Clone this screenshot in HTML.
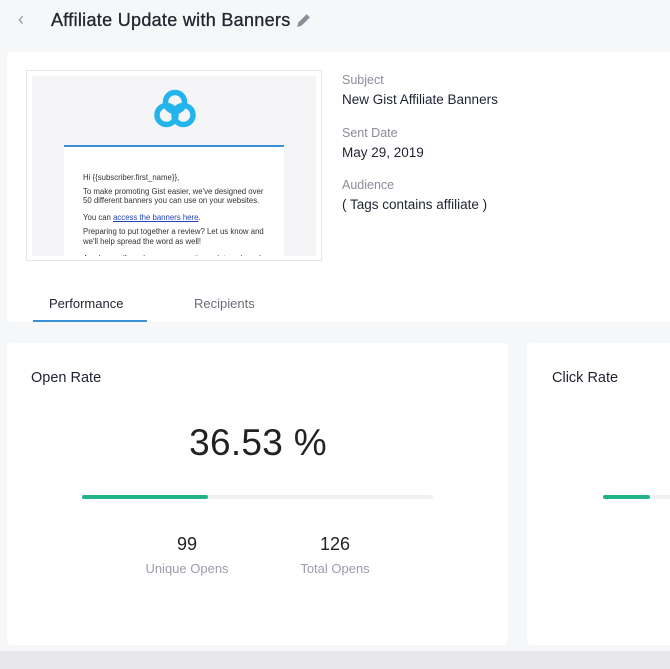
<!DOCTYPE html>
<html><head><meta charset="utf-8"><style>
*{margin:0;padding:0;box-sizing:border-box}
body{width:670px;height:669px;overflow:hidden;background:#f6f7f9;font-family:"Liberation Sans",sans-serif;position:relative;color:#1f2233}
.a{position:absolute}
</style></head><body>
<div class="a" style="left:18px;top:9px;color:#999;font-size:18px">&lsaquo;</div>
<div class="a" style="left:51px;top:10px;font-size:18px;color:#23252f;letter-spacing:0.3px;-webkit-text-stroke:0.3px #23252f">Affiliate Update with Banners</div>
<svg class="a" style="left:295px;top:12px" width="17" height="17" viewBox="0 0 16 16"><path d="M2 14l1-4 8-8 3 3-8 8z" fill="#8c8f99"/></svg>
<div class="a" style="left:7px;top:52px;width:663px;height:270px;background:#fff;border-radius:4px 0 0 4px"></div>
<div class="a" style="left:26px;top:70px;width:296px;height:191px;border:1px solid #e6e6ea;background:#fff"></div>
<div class="a" style="left:32px;top:76px;width:284px;height:180px;background:#f5f5f8;overflow:hidden">
 <svg class="a" style="left:122px;top:13px" width="42" height="40" viewBox="0 0 42 40"><g fill="none" stroke="#22b4ea" stroke-width="5.5"><circle cx="21" cy="13" r="9.5"/><circle cx="12.5" cy="26" r="9.5"/><circle cx="29.5" cy="26" r="9.5"/></g></svg>
 <div class="a" style="left:32px;top:69px;width:220px;height:120px;background:#fff;border-top:2px solid #3a8fd6;font-size:7.8px;color:#333;padding:26px 0 0 19px;line-height:9.5px">
 <div>Hi {{subscriber.first_name}},</div>
 <div style="margin-top:4px">To make promoting Gist easier, we've designed over<br>50 different banners you can use on your websites.</div>
 <div style="margin-top:7px">You can <span style="color:#2244bb;text-decoration:underline">access the banners here</span>.</div>
 <div style="margin-top:5px">Preparing to put together a review? Let us know and<br>we'll help spread the word as well!</div>
 <div style="margin-top:8px">As always, if you have any questions - let me know!</div>
 </div>
</div>
<div class="a" style="left:342px;top:73px;font-size:12.5px;color:#8a8d99">Subject</div>
<div class="a" style="left:342px;top:92px;font-size:13.5px">New Gist Affiliate Banners</div>
<div class="a" style="left:342px;top:126px;font-size:12.5px;color:#8a8d99">Sent Date</div>
<div class="a" style="left:342px;top:145px;font-size:13.5px">May 29, 2019</div>
<div class="a" style="left:342px;top:178px;font-size:12.5px;color:#8a8d99">Audience</div>
<div class="a" style="left:342px;top:197px;font-size:13.5px">( Tags contains affiliate )</div>
<div class="a" style="left:49px;top:296px;font-size:13px;color:#23252f">Performance</div>
<div class="a" style="left:194px;top:296px;font-size:13px;color:#6b6e78">Recipients</div>
<div class="a" style="left:33px;top:320px;width:114px;height:2px;background:#3a8fd6"></div>
<div class="a" style="left:7px;top:343px;width:501px;height:302px;background:#fff;border-radius:5px"></div>
<div class="a" style="left:527px;top:343px;width:143px;height:302px;background:#fff;border-radius:5px 0 0 5px"></div>
<div class="a" style="left:31px;top:370px;font-size:14.5px">Open Rate</div>
<div class="a" style="left:552px;top:370px;font-size:14.5px">Click Rate</div>
<div class="a" style="left:0;width:516px;top:422px;text-align:center;font-size:37px;color:#222;letter-spacing:0.3px">36.53 %</div>
<div class="a" style="left:82px;top:495px;width:351px;height:4px;background:#f1f1f3;border-radius:2px"></div>
<div class="a" style="left:82px;top:495px;width:126px;height:4px;background:#23b38b;border-radius:2px"></div>
<div class="a" style="left:603px;top:495px;width:67px;height:4px;background:#f1f1f3"></div>
<div class="a" style="left:603px;top:495px;width:47px;height:4px;background:#23b38b;border-radius:2px"></div>
<div class="a" style="left:127px;width:120px;top:534px;text-align:center;font-size:18px;color:#222">99</div>
<div class="a" style="left:127px;width:120px;top:561px;text-align:center;font-size:13px;color:#9a9dab">Unique Opens</div>
<div class="a" style="left:275px;width:120px;top:534px;text-align:center;font-size:18px;color:#222">126</div>
<div class="a" style="left:275px;width:120px;top:561px;text-align:center;font-size:13px;color:#9a9dab">Total Opens</div>
<div class="a" style="left:0;top:651px;width:670px;height:18px;background:#e8e8eb"></div>
</body></html>
